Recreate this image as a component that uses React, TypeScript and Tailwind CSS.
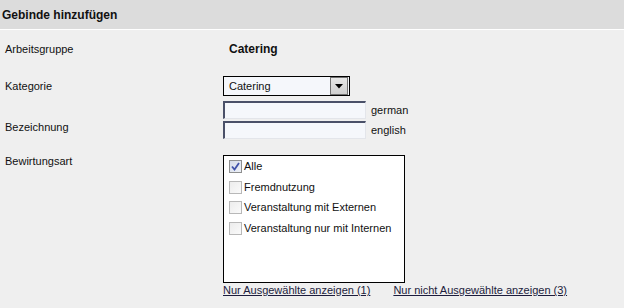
import React from "react";

const options = [
    { label: "Alle", checked: true },
    { label: "Fremdnutzung", checked: false },
    { label: "Veranstaltung mit Externen", checked: false },
    { label: "Veranstaltung nur mit Internen", checked: false },
];

const CheckBox: React.FC<{ checked: boolean }> = ({ checked }) =>
    checked ? (
        <span className="w-[13px] h-[13px] shrink-0 border border-[#8e8f8f] bg-gradient-to-br from-[#d4dbea] to-[#eef1f7] flex items-center justify-center">
            <svg width="9" height="9" viewBox="0 0 9 9">
                <path d="M1 4.5 L3.5 7.5 L8 1" fill="none" stroke="#3f52aa" strokeWidth="1.8" />
            </svg>
        </span>
    ) : (
        <span className="w-[13px] h-[13px] shrink-0 border border-[#b8b8b8] bg-gradient-to-br from-[#ececec] to-[#fafafa]" />
    );

const TextInput: React.FC = () => (
    <div className="w-[143px] h-[18px] bg-[#f5f7fb] border-t-2 border-l-2 border-r border-b border-t-[#4a5068] border-l-[#4a5068] border-r-[#e3e5ea] border-b-[#e3e5ea]" />
);

export default function App() {
    return (
        <div className="w-[624px] h-[308px] overflow-hidden bg-[#efefef] text-[11px] text-[#111] font-['Liberation_Sans',Arial,sans-serif]">
            {/* Header */}
            <div className="h-[30px] bg-[#dcdcdc] border-b border-white flex items-center pl-[2px] font-bold text-[12px]">
                Gebinde hinzufügen
            </div>

            <div className="pl-[5px]">
                {/* Arbeitsgruppe */}
                <div className="mt-[10px] h-[18px] flex items-center">
                    <div className="w-[218px]">Arbeitsgruppe</div>
                    <div className="pl-[6px] font-bold text-[12px]">Catering</div>
                </div>

                {/* Kategorie */}
                <div className="mt-[18px] flex items-center">
                    <div className="w-[218px]">Kategorie</div>
                    <div className="w-[127px] h-[20px] border border-black bg-[#f5f7fb] flex items-center">
                        <span className="pl-[5px]">Catering</span>
                        <span className="ml-auto mr-[1px] w-[18px] h-[18px] border border-[#707070] bg-gradient-to-b from-[#e6e6e6] to-[#cfcfcf] flex items-center justify-center">
                            <svg width="8" height="5" viewBox="0 0 8 5">
                                <polygon points="0,0 8,0 4,4.5" fill="#000" />
                            </svg>
                        </span>
                    </div>
                </div>

                {/* Bezeichnung */}
                <div className="mt-[5px] flex items-center">
                    <div className="w-[218px]" />
                    <TextInput />
                    <span className="ml-[5px]">german</span>
                </div>
                <div className="mt-[2px] flex items-start">
                    <div className="w-[218px] leading-[13px]">Bezeichnung</div>
                    <div className="flex items-center">
                        <TextInput />
                        <span className="ml-[5px]">english</span>
                    </div>
                </div>

                {/* Bewirtungsart */}
                <div className="mt-[16px] flex items-start">
                    <div className="w-[218px] leading-[13px]">Bewirtungsart</div>
                    <div>
                        <div className="w-[182px] h-[128px] border border-black bg-white pl-[5px]">
                            {options.map((o) => (
                                <div key={o.label} className="h-[20.7px] flex items-center gap-[2px]">
                                    <CheckBox checked={o.checked} />
                                    <span>{o.label}</span>
                                </div>
                            ))}
                        </div>
                        <div className="flex leading-[13px] pt-[1px]">
                            <a href="#" className="underline text-[#1c1c3c]">Nur Ausgewählte anzeigen (1)</a>
                            <a href="#" className="underline text-[#1c1c3c] ml-[23px]">Nur nicht Ausgewählte anzeigen (3)</a>
                        </div>
                    </div>
                </div>
            </div>
        </div>
    );
}
